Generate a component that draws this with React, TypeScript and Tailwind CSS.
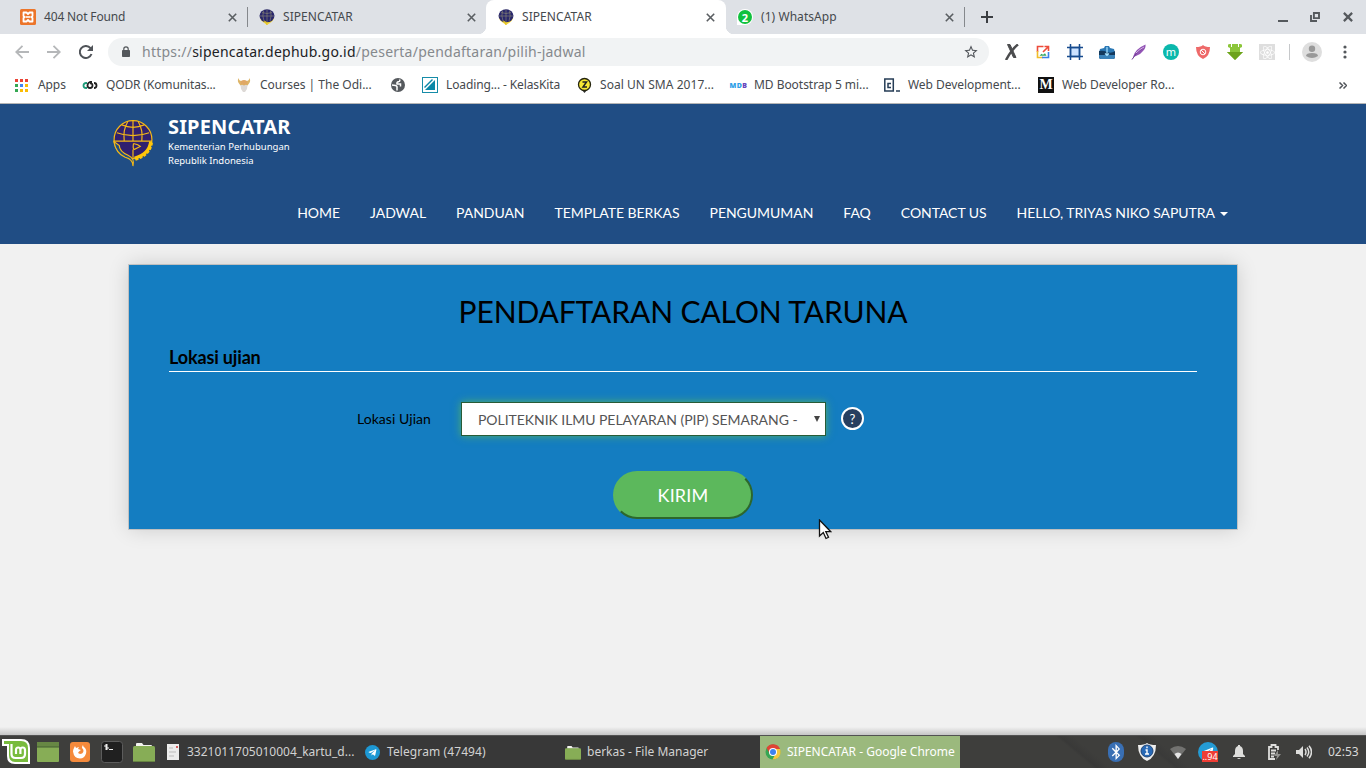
import React from "react";
import { MdStarBorder } from "react-icons/md";
import { FaReact, FaTelegramPlane, FaBluetoothB } from "react-icons/fa";

const noto = "font-['Noto_Sans',sans-serif]";

function Emblem({ className }: { className: string }) {
  return (
    <svg viewBox="0 0 42 48" className={className} fill="none" stroke="#f5b916" strokeWidth="1.2">
      <circle cx="21" cy="20" r="19.300" fill="#31206f" />
      <path d="M1.500 21.500h39M21 1v21M4.500 13q16.500 6 33 0M9.500 5q11.500 5 23 0M12 21C11 13 12.500 7 15.500 2M30 21C31 13 29.500 7 26.500 2" />
      <path d="M1.500 22Q3.500 34 13 38q8 2 8 9 2-8-5-11Q7 32 7 26z" fill="#204d84" />
      <path d="M21.500 24q5 1 7 3l-6 3q-2 0-1-6M21 30v10" />
      <path d="M39 22Q37.500 35 22.500 39" stroke="#ffc60b" strokeWidth="3" />
      <path d="M40 23Q38.500 36 22.500 40.500" stroke="#ffc60b" strokeWidth="2.800" strokeDasharray="3 1.500" />
    </svg>
  );
}

function MiniEmblem() {
  return (
    <svg viewBox="0 0 16 16" className="h-4 w-4">
      <path d="M14 5q3 5-3 9l-3 2-4-3Q1 11 1 8z" fill="#efd23a" />
      <ellipse cx="8" cy="6.800" rx="7.500" ry="6.500" fill="#29276b" />
      <path d="M1 7h14M8 .5V13M3 3.500q5 2 10 0M4.500 1.500Q3 7 5 12M11.500 1.500Q13 7 11 12" fill="none" stroke="#8f8b75" strokeWidth=".6" />
      <path d="M5 12q3 0 3 4" fill="none" stroke="#e5c421" />
    </svg>
  );
}

function Xampp() {
  return (
    <svg viewBox="0 0 16 16" className="h-4 w-4">
      <rect width="16" height="16" rx="1.500" fill="#ec752a" />
      <path d="M3.500 3.500h3L8 5l1.500-1.500h3V7l-1 1 1 1v3.500h-3L8 11l-1.500 1.500h-3V9l1-1-1-1z" fill="none" stroke="#fff" strokeWidth="1.800" strokeLinejoin="round" />
      <path d="M5.500 7.200h5v1.600h-5z" fill="#fff" />
    </svg>
  );
}

function WhatsApp() {
  return (
    <div className="flex h-4 w-4 items-center justify-center rounded-full rounded-bl-none bg-white">
      <div className="flex h-[14px] w-[14px] items-center justify-center rounded-full bg-[#10c13e] font-['Noto_Sans',sans-serif] text-[11px] leading-none font-bold text-white">2</div>
    </div>
  );
}

function Close({ className = "h-[9px] w-[9px]" }: { className?: string }) {
  return (
    <svg viewBox="0 0 9 9" className={className}>
      <path d="M.8.8l7.400 7.400M8.200.8L.8 8.200" stroke="#5a5e62" strokeWidth="1.600" />
    </svg>
  );
}

function Tab({ icon, title, active, sep }: { icon: React.ReactNode; title: string; active?: boolean; sep?: boolean }) {
  return (
    <div className={"relative flex h-[34px] shrink-0 items-center pl-3 " + (active ? "-mr-px w-[240px] rounded-t-lg bg-white" : "w-[239px]")}>
      {active && (
        <>
          <span className="absolute bottom-0 -left-2 h-2 w-2 bg-[radial-gradient(circle_at_0_0,transparent_8px,#fff_8.5px)]" />
          <span className="absolute -right-2 bottom-0 h-2 w-2 bg-[radial-gradient(circle_at_100%_0,transparent_8px,#fff_8.5px)]" />
        </>
      )}
      {icon}
      <span className="ml-2 w-[183.5px] text-xs whitespace-nowrap text-[#45494d]"><span className={title.startsWith("404") ? "tracking-[-0.15px]" : "tracking-[0.06px]"}>{title}</span></span>
      <Close />
      {sep && <span className="absolute top-[7px] -right-px h-5 w-px bg-[#85888c]" />}
    </div>
  );
}

function Bookmark({ icon, label, className }: { icon: React.ReactNode; label: string; className: string }) {
  return (
    <div className={"flex shrink-0 items-center gap-2 whitespace-nowrap " + className}>
      <span className="flex h-4 w-4 shrink-0 items-center justify-center">{icon}</span>
      <span>{label}</span>
    </div>
  );
}

function AppsIcon() {
  const colors = ["#ea4335", "#ea4335", "#ea4335", "#34a853", "#4285f4", "#fbbc05", "#34a853", "#fbbc05", "#fbbc05"];
  return (
    <svg viewBox="0 0 13 13" className="mr-px h-[13px] w-[13px] shrink-0">
      {colors.map((c, i) => <rect key={i} x={(i % 3) * 5} y={Math.floor(i / 3) * 5} width="3" height="3" fill={c} />)}
    </svg>
  );
}

function Rings() {
  return (
    <svg viewBox="0 0 16 16" className="h-4 w-4" fill="none" strokeWidth="1.800">
      <path d="M5 6H4a2.300 2.300 0 0 0 0 5h1" stroke="#1d9b79" />
      <path d="M10 5H8Q5.500 6 5.500 8.500T8 11t2.500-2.500T8 6.500" stroke="#222" />
      <path d="M12 6q2.500 0 2.500 2.500T12 11" stroke="#222" />
    </svg>
  );
}

function Viking() {
  return (
    <svg viewBox="0 0 16 16" className="h-4 w-4">
      <path d="M2.500 1q.5 3 3 3h5q2.500 0 3-3 1.500 3-.5 5.500l-1.500 2h-7L3 6.500Q1 4 2.500 1z" fill="#ddb568" />
      <path d="M4.500 8h7l-.5 4-2 3H7l-2-3z" fill="#ddd9d6" />
      <path d="M5 4q3-2 6 0l.5 4-2-1.500L8 9 6.500 6.500l-2 1.500z" fill="#e0a765" />
    </svg>
  );
}

function Kelas() {
  return (
    <svg viewBox="0 0 16 16" className="h-4 w-4"><rect x=".5" y=".5" width="15" height="15" fill="#fff" stroke="#168ca8" /><path d="M13 3v10H3z" fill="#0987a7" /><path d="M2.500 10.500l8-8" stroke="#0987a7" strokeWidth="1.500" /></svg>
  );
}

const exts = [
  <svg viewBox="0 0 16 16" className="ml-px h-4 w-4" stroke="#4b4c4e"><path d="M3.500 .5h2.500l6 13h-2.500z" fill="#4b4c4e" /><path d="M14 .5Q8 5 2 16" fill="none" strokeWidth="2.500" /></svg>,
  <svg viewBox="0 0 16 16" className="h-4 w-4" fill="none" strokeWidth="1.600"><path d="M8.500 2.500H2.500V8" stroke="#ed4b3a" /><path d="M2.500 7v6.500H8" stroke="#f1bd2b" /><path d="M7 13.500h6.500V8" stroke="#3b82e8" /><path d="M8 8l5-5M9.500 2.500h4V7" stroke="#ed4b3a" /><path d="M4.500 11.800l2-2 1.500 1 2-1.500 1.500 2.500z" fill="#34a763" stroke="none" /></svg>,
  <svg viewBox="0 0 16 16" className="h-4 w-4" fill="#cce2ff" stroke="#174b8e" strokeWidth="1.500"><path d="M3.500 3.500h9v9h-9z" /><path d="M3.500 0v16M12.500 0v16M0 3.500h16M0 12.500h16" /></svg>,
  <svg viewBox="0 0 16 16" className="h-4 w-4"><path d="M1 5l4-1 1-2h4l1 2 4 1 1 4H0z" fill="#2b78b5" /><path d="M0 7q4-1 8 1t8-1v6q0 2-2 2H2q-2 0-2-2z" fill="#13395d" /><path d="M0 11h16v2q0 2-2 2H2q-2 0-2-2z" fill="#3a82b9" /><path d="M8 3v8M6 9.500l2 2 2-2" fill="none" stroke="#a7e3ff" strokeWidth="1.200" /></svg>,
  <svg viewBox="0 0 16 16" className="h-4 w-4"><path d="M2 13Q4 5 14.500.5 15 4 12 7q-3 4-7 5z" fill="#9254b5" /><path d="M1 15.500Q5 8 13 3" fill="none" stroke="#6e3991" /><path d="M5 9q4-4 8-6" fill="none" stroke="#dbb9ea" /></svg>,
  <div className="flex h-4 w-4 items-center justify-center rounded-full bg-[#0bb8ac] pb-0.5 text-[11px] leading-none text-white">m</div>,
  <svg viewBox="0 0 16 16" className="h-4 w-4"><path d="M1 3q5 0 7-2 2 2 7 2 0 9-7 12Q1 12 1 3z" fill="#ee6969" /><circle cx="8" cy="8" r="2.800" fill="none" stroke="#fff" /><path d="M6 6l4 4" fill="none" stroke="#fff" /></svg>,
  <svg viewBox="0 0 16 16" className="h-4 w-4"><path d="M1 1q0-1 2-1h1v3h1V0h6v3h1V0h1q2 0 2 1v2l-2 1v4h3l-8 8-8-8h3V4L1 3z" fill="#8cc63a" /><path d="M0 8h16l-8 8z" fill="#6da31c" /></svg>,
  <div className="flex h-4 w-4 items-center justify-center bg-[#dedede]"><FaReact className="h-[15px] w-[15px] text-white" /></div>,
];

function Browser() {
  return (
    <div className={noto}>
      <div className="flex h-[34px] bg-[#dee1e6] pl-2">
        <Tab icon={<Xampp />} title="404 Not Found" sep />
        <Tab icon={<MiniEmblem />} title="SIPENCATAR" />
        <Tab icon={<MiniEmblem />} title="SIPENCATAR" active />
        <Tab icon={<WhatsApp />} title="(1) WhatsApp" sep />
        <div className="flex flex-1 items-center pl-[17px]">
          <svg viewBox="0 0 12 12" className="h-3 w-3"><path d="M6 0v12M0 6h12" stroke="#3b3e42" strokeWidth="2" /></svg>
          <div className="ml-auto flex items-center pr-[13px]">
            <svg viewBox="0 0 10 10" className="h-[10px] w-[10px]"><path d="M0 9h10" stroke="#55595d" strokeWidth="2" /></svg>
            <svg viewBox="0 0 10 10" className="ml-[22px] h-[10px] w-[10px]" fill="none" stroke="#55595d" strokeWidth="1.900"><path d="M3.900 1h5.100v5.100H3.900zM1 3v6h6" /></svg>
            <svg viewBox="0 0 9 9" className="ml-[23px] h-[10px] w-[10px]"><path d="M.8.800l7.400 7.400M8.200.800L.8 8.200" stroke="#55595d" strokeWidth="2" /></svg>
          </div>
        </div>
      </div>
      <div className="flex h-9 items-center bg-white">
        <svg viewBox="0 0 14 14" className="ml-[15px] h-[14px] w-[14px]" fill="none" stroke="#b5b7b9" strokeWidth="1.800"><path d="M14 7H1.500M7.500.8L1.200 7l6.300 6.200" /></svg>
        <svg viewBox="0 0 14 14" className="ml-[18px] h-[14px] w-[14px]" fill="none" stroke="#b5b7b9" strokeWidth="1.800"><path d="M0 7h12.500M6.500.8L12.800 7l-6.300 6.200" /></svg>
        <svg viewBox="0 0 14 14" className="ml-[18px] h-[14px] w-[14px]" fill="none" stroke="#505459" strokeWidth="2"><path d="M12.500 9A6 6 0 1 1 11.500 3.200L13 5" /><path d="M14 0v6H8z" fill="#505459" stroke="none" /></svg>
        <div className="ml-[15px] flex h-7 w-[881px] items-center rounded-full bg-[#f1f3f4] pr-[10px] pl-[14px]">
          <svg viewBox="0 0 8 11" className="mb-px h-[11px] w-2"><rect y="4" width="8" height="7" rx=".8" fill="#54585c" /><path d="M1.800 5V3a2.200 2.200 0 0 1 4.400 0v2" fill="none" stroke="#54585c" strokeWidth="1.200" /></svg>
          <span className="ml-3 text-sm tracking-[0.24px] whitespace-nowrap text-[#85898d]">https://<span className="text-[#202124]">sipencatar.dephub.go.id</span>/peserta/pendaftaran/pilih-jadwal</span>
          <MdStarBorder className="ml-auto h-4 w-4 text-[#505459]" />
        </div>
        <div className="ml-[6px] flex">
          {exts.map((e, i) => <div key={i} className="flex w-8 items-center justify-center">{e}</div>)}
        </div>
        <span className="ml-[6px] h-4 w-px bg-[#c6c8ca]" />
        <svg viewBox="0 0 20 20" className="ml-3 h-5 w-5"><circle cx="10" cy="10" r="10" fill="#dedede" /><circle cx="10" cy="6.700" r="3.200" fill="#999" /><path d="M4 14q0-3 6-3t6 3q-6 4-12 0z" fill="#999" /></svg>
        <svg viewBox="0 0 4 14" className="ml-[20.5px] h-[14px] w-1"><g fill="#54585c"><circle cx="2" cy="2" r="1.600" /><circle cx="2" cy="7" r="1.600" /><circle cx="2" cy="12" r="1.600" /></g></svg>
      </div>
      <div className="flex h-[34px] items-center border-b border-[#b5b5b5] bg-white pb-[3px] pl-[14px] text-xs text-[#45494d]">
        <Bookmark className="w-[68px] tracking-[-0.1px]" icon={<AppsIcon />} label="Apps" />
        <Bookmark className="w-[154px] tracking-[-0.13px]" icon={<Rings />} label="QODR (Komunitas..." />
        <Bookmark className="w-[154px]" icon={<Viking />} label="Courses | The Odi..." />
        <span className="flex w-8 shrink-0"><svg viewBox="0 0 16 16" className="h-4 w-4"><circle cx="8" cy="8" r="7" fill="#55595d" /><path d="M9.500 2.500q1 2-1 2.200-2 .3-1.500 2.300h3.500v2.500M2 8l3.500.5Q7.500 9 7 11v2.500" fill="none" stroke="#fff" strokeWidth="1.500" /></svg></span>
        <Bookmark className="w-[154px] tracking-[-0.12px]" icon={<Kelas />} label="Loading... - KelasKita" />
        <Bookmark className="w-[154px] tracking-[0.05px]" icon={<svg viewBox="0 0 16 16" className="h-4 w-4"><path d="M5 12h7l-3.500 4z" fill="#333" /><circle cx="8.500" cy="7.500" r="6" fill="#f8e735" stroke="#25250f" strokeWidth="1.300" /><path d="M6.500 5h4L7 10h4" fill="none" stroke="#222" strokeWidth="1.500" /></svg>} label="Soal UN SMA 2017..." />
        <Bookmark className="w-[154px] tracking-[-0.04px]" icon={<span className="pl-px text-[7px] leading-none font-black tracking-[0.5px] text-[#2d9fe7]">MD<span className="text-[#6745bc]">B</span></span>} label="MD Bootstrap 5 mi..." />
        <Bookmark className="w-[154px] tracking-[-0.05px]" icon={<svg viewBox="0 0 16 16" className="h-4 w-4" fill="none" stroke="#263d56" strokeWidth="1.500"><path d="M.8 2h8.500v12H.8zM12 14h4M7 6.500H4v4h3" /></svg>} label="Web Development..." />
        <Bookmark className="w-[154px] tracking-[-0.05px]" icon={<span className="flex h-4 w-4 items-center justify-center bg-[#111] font-['Liberation_Serif',serif] text-[14px] leading-none font-bold text-white">M</span>} label="Web Developer Ro..." />
        <svg viewBox="0 0 8 7" className="mr-[19px] ml-auto h-[7px] w-2" fill="none" stroke="#505459" strokeWidth="1.500"><path d="M.5.500l3 3-3 3M4.500.500l3 3-3 3" /></svg>
      </div>
    </div>
  );
}

function Header() {
  return (
    <header className="flex h-[140px] flex-col bg-[#204d84] text-white">
      <div className="flex h-[94px] pt-4 pl-[112px]">
        <Emblem className="h-[47px] w-[42px]" />
        <div className="ml-[14px] -mt-[5px] font-['Noto_Sans',sans-serif] whitespace-nowrap">
          <div className="text-[20px] leading-[23px] font-bold tracking-[0.15px]">SIPENCATAR</div>
          <div className="mt-0.5 text-[9.500px] leading-[14px]">Kementerian Perhubungan<br />Republik Indonesia</div>
        </div>
      </div>
      <nav className="flex justify-end gap-[30px] pr-[138px] text-sm leading-[30px] tracking-[-0.04px] whitespace-nowrap">
        <span>HOME</span><span>JADWAL</span><span>PANDUAN</span><span>TEMPLATE BERKAS</span><span>PENGUMUMAN</span><span>FAQ</span><span>CONTACT US</span>
        <span className="flex items-center gap-[5px]">HELLO, TRIYAS NIKO SAPUTRA<svg viewBox="0 0 8 4" className="mt-0.5 h-1 w-2"><path d="M0 0h8L4 4z" fill="#fff" /></svg></span>
      </nav>
    </header>
  );
}

function Form() {
  return (
    <main className="relative h-[491px] bg-[#f1f1f1] px-[129px] pt-[21px]">
      <section className="h-[264px] bg-[#147dc1] px-10 pt-6 text-black shadow-[0_0_0_1px_rgba(0,0,0,.14),0_0_20px_rgba(0,0,0,.16)]">
        <h1 className="text-center text-[30px] leading-[44px] tracking-[-0.12px]">PENDAFTARAN CALON TARUNA</h1>
        <h2 className="mt-[12px] h-[27px] border-b border-white text-[18px] leading-[24px] font-bold tracking-[-0.15px]">Lokasi ujian</h2>
        <div className="mt-[30px] flex h-[34px] items-center">
          <label className="w-[262px] text-right text-sm tracking-[0.06px]">Lokasi Ujian</label>
          <div className="ml-[30px] flex h-[34px] w-[365px] items-center border border-[#285b36] bg-white pr-[5px] pl-4 text-sm tracking-[-0.05px] whitespace-nowrap text-[#555] shadow-[0_0_8px_rgba(92,184,92,.85)]">
            <span className="pt-0.5">POLITEKNIK ILMU PELAYARAN (PIP) SEMARANG -</span>
            <svg viewBox="0 0 6 6" className="ml-auto h-[6px] w-[6px]"><path d="M0 0h6L3 6z" fill="#444" /></svg>
          </div>
          <span className="mb-px ml-[15px] flex h-[23px] w-[23px] items-center justify-center rounded-full border-2 border-white bg-[#273f60] pt-px text-[13px] leading-none text-white">?</span>
        </div>
        <div className="mt-[35px] flex justify-center">
          <button className="h-12 w-[140px] rounded-[25px] border-2 border-t-[#5cb85c] border-r-[#2d672d] border-b-[#2d672d] border-l-[#5cb85c] bg-[#5cb85c] text-lg leading-none tracking-[0.2px] text-white">KIRIM</button>
        </div>
      </section>
      <svg viewBox="0 0 14 21" className="absolute top-[275px] left-[818px] h-[21px] w-[14px]"><path d="M1.500 1v16l3.800-3.500 2.700 6 2.500-1.200-2.700-5.600h5z" fill="#fff" stroke="#111" strokeWidth="1.300" /></svg>
      <div className="absolute right-0 bottom-0 left-0 h-2 bg-gradient-to-b from-transparent to-[#c5c5c5]" />
    </main>
  );
}

function Folder({ small }: { small?: boolean }) {
  return (
    <svg viewBox="0 0 22 20" className={small ? "h-[15px] w-4" : "h-5 w-[22px]"}><path d="M3 5V2q0-1 1-1h5l1.500 2H18q1 0 1 1v1z" fill="#f3f3ef" /><rect y="4" width="22" height="16" rx="1.500" fill="#87ad56" /><path d="M1 19.500h20" stroke="#678442" /></svg>
  );
}

function Task({ icon, label, active }: { icon: React.ReactNode; label: string; active?: boolean }) {
  return (
    <div className={"flex h-full w-[200px] shrink-0 items-center whitespace-nowrap " + (active ? "bg-[#9bb97d] text-white" : "bg-[#383838] text-[#d2d2d2]")}>
      <span className="flex w-[27px] items-center pl-[5px]">{icon}</span><span className={label.startsWith("Telegram") ? "tracking-[0.1px]" : ""}>{label}</span>
    </div>
  );
}

function Taskbar() {
  return (
    <footer className={"flex h-[33px] items-center border-t border-[#525252] bg-[#3e3e3c] text-xs " + noto}>
      <div className="flex w-40 shrink-0 items-center">
        <svg viewBox="0 0 28 26" className="ml-0.5 h-[26px] w-7"><path d="M0 0h19q9 0 9 9v16H13q-8 0-8-8V7H0z" fill="#fff" /><path d="M2 2h17q7 0 7 7v14H13q-6 0-6-7V5H2z" fill="#78bb3d" /><path d="M9.500 5v10q0 4 4 4h5.500q4 0 4-4v-4q0-2.500-2.300-2.500T18.400 11v4-4q0-2.500-2.200-2.500T14 11v4" fill="none" stroke="#fff" strokeWidth="2.200" /></svg>
        <svg viewBox="0 0 22 20" className="ml-[7px] h-5 w-[22px]"><rect width="22" height="20" rx="1" fill="#87ad56" /><path d="M0 0h22v5H0z" fill="#678744" /><path d="M0 5h22" stroke="#455e30" /></svg>
        <svg viewBox="0 0 20 20" className="ml-[11px] h-5 w-5"><rect width="20" height="20" rx="3" fill="#f58a3c" /><path d="M4 6l1-2 1 2 3-1-1 2 3 1-2 1.500-1 1.500 2 1q3 0 3.500-3 0-2-1.500-3 0-2 1-3 0 1.500 1.500 2.500 2.500 2.500 1.500 6-1.500 5-6 5-6 0-7-7 0-2 1-3.500z" fill="#fff" /></svg>
        <svg viewBox="0 0 22 22" className="ml-[11px] h-[22px] w-[22px]"><rect x=".5" y=".5" width="21" height="21" rx="3" fill="#202020" stroke="#5c5c5c" /><path d="M7 4H4v2h3v2H4M5.500 3v6M8 8.500h4" fill="none" stroke="#eee" /></svg>
        <span className="ml-[10px]"><Folder /></span>
      </div>
      <Task icon={<svg viewBox="0 0 16 16" className="h-4 w-4"><path d="M2 0h12v16H2z" fill="#ececec" /><path d="M4 4h4M4 8h7M4 12h5" stroke="#bbb" /><path d="M11 2h2v2h-2z" fill="#d35d5d" /></svg>} label="3321011705010004_kartu_d..." />
      <Task icon={<span className="flex h-[15px] w-[15px] items-center justify-center rounded-full bg-[#1d98d4]"><FaTelegramPlane className="h-[9px] w-[9px] text-white" /></span>} label="Telegram (47494)" />
      <Task icon={<Folder small />} label="berkas - File Manager" />
      <Task active icon={<svg viewBox="0 0 16 16" className="h-4 w-4"><circle cx="8" cy="8" r="7.500" fill="#37a653" /><path d="M1.500 4A7.500 7.500 0 0 1 15 5H8L5 10z" fill="#df4435" /><path d="M15 5A7.500 7.500 0 0 1 7.500 15.500L11 9V5z" fill="#f5c73c" /><circle cx="8" cy="8" r="4" fill="#fff" /><circle cx="8" cy="8" r="3" fill="#3e82ee" /></svg>} label="SIPENCATAR - Google Chrome" />
      <div className="flex h-full flex-1 items-center bg-[linear-gradient(40deg,#3e3e3c_0_30%,#393938_31%,#3e3e3c_34%_48%,#3a3a39_49%,#3e3e3c_52%)] pl-[148px]">
        <span className="flex h-5 w-4 shrink-0 items-center justify-center rounded-full bg-[#396fb4]"><FaBluetoothB className="h-4 w-4 text-white" /></span>
        <svg viewBox="0 0 20 20" className="ml-[13px] h-5 w-5 shrink-0"><path d="M1 3q6 0 9-2 3 2 9 2 0 12-9 16Q1 15 1 3z" fill="#eee" /><circle cx="10" cy="9" r="6" fill="#2869b5" stroke="#204576" /><path d="M8.500 8H10v4m-2 0h4M10 4.500v1.800" fill="none" stroke="#fff" strokeWidth="1.400" /></svg>
        <svg viewBox="0 0 16 13" className="ml-[13px] h-[13px] w-4 shrink-0"><path d="M0 3q8-6 16 0L8 13z" fill="#727270" /><path d="M4.500 8q3.500-3 7 0L8 13z" fill="#e5e5e5" /></svg>
        <span className="relative ml-3 flex h-5 w-5 shrink-0 items-center justify-center rounded-full bg-[#249bd4]"><FaTelegramPlane className="h-3 w-3 text-white" /><span className="absolute top-[9px] left-1 flex h-[11px] w-4 items-center justify-center bg-[#ef3d34] text-[9px] leading-none text-white">..94</span></span>
        <svg viewBox="0 0 12 16" className="ml-[15px] h-4 w-3 shrink-0 fill-[#dededc]"><path d="M5 1h2v1q3 1 3 5v3l2 2v1H0v-1l2-2V7q0-4 3-5zM4 14h4q-2 2-4 0z" /></svg>
        <svg viewBox="0 0 15 17" className="ml-[22px] h-[17px] w-[15px] shrink-0" fill="none" stroke="#dededc" strokeWidth="1.800"><path d="M11 6V3H8.500V1h-4v2H2v12h6M4 6.500h5M4 9.500h4M4 12.500h3" /><path d="M11 6l-4 6h3l-1 4 5-6h-3z" fill="#92928f" stroke="none" /></svg>
        <svg viewBox="0 0 16 14" className="ml-[14px] h-[14px] w-4 shrink-0" fill="none" stroke="#dededc" strokeWidth="1.500"><path d="M0 5h3l4-4v12L3 9H0z" fill="#dededc" stroke="none" /><path d="M9 4q2 3 0 6M11 2.500q3.500 4.500 0 9M13 .8q5 6.200 0 12.400" /></svg>
        <span className="ml-4 text-[#d8d8d8]">02:53</span>
      </div>
    </footer>
  );
}

export default function App() {
  return (
    <div className="h-[768px] w-[1366px] overflow-hidden bg-[#f1f1f1] font-['Lato',sans-serif]">
      <Browser /><Header /><Form /><Taskbar />
    </div>
  );
}
